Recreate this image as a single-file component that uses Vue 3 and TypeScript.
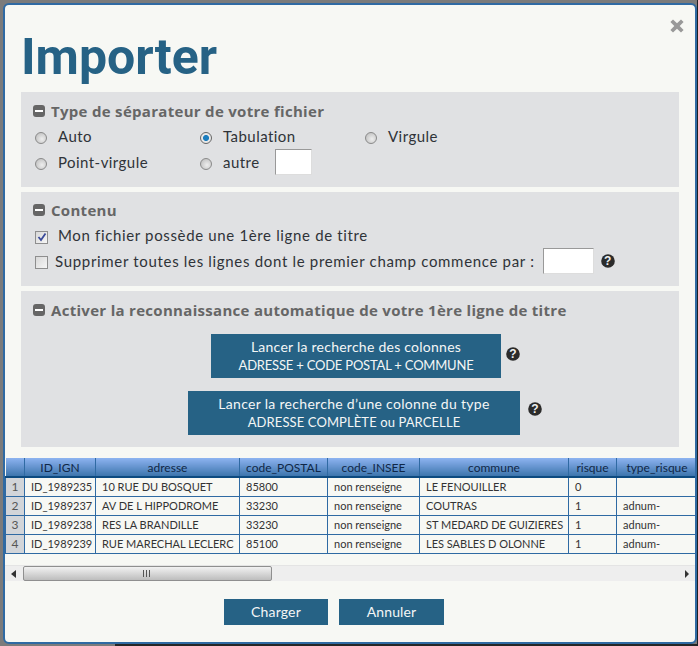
<script setup lang="ts">
const columns = [
  { key: 'id', label: 'ID_IGN', width: 71 },
  { key: 'adresse', label: 'adresse', width: 144 },
  { key: 'postal', label: 'code_POSTAL', width: 88 },
  { key: 'insee', label: 'code_INSEE', width: 92 },
  { key: 'commune', label: 'commune', width: 149 },
  { key: 'risque', label: 'risque', width: 48 },
  { key: 'type', label: 'type_risque', width: 81 },
]
const rows = [
  ['ID_1989235', '10 RUE DU BOSQUET', '85800', 'non renseigne', 'LE FENOUILLER', '0', ''],
  ['ID_1989237', 'AV DE L HIPPODROME', '33230', 'non renseigne', 'COUTRAS', '1', 'adnum-'],
  ['ID_1989238', 'RES LA BRANDILLE', '33230', 'non renseigne', 'ST MEDARD DE GUIZIERES', '1', 'adnum-'],
  ['ID_1989239', 'RUE MARECHAL LECLERC', '85100', 'non renseigne', 'LES SABLES D OLONNE', '1', 'adnum-'],
]
</script>

<template>
  <div class="page">
    <div class="dialog">
      <svg class="close" viewBox="0 0 14 14" width="14" height="14">
        <path d="M3 0.5 L7 4.3 L11 0.5 L13.6 3 L9.7 7 L13.6 11 L11 13.6 L7 9.7 L3 13.6 L0.4 11 L4.3 7 L0.4 3 Z" fill="#999" />
      </svg>
      <h1 class="title">Importer</h1>

      <section class="panel p1">
        <h2 class="heading"><span class="minus"></span>Type de séparateur de votre fichier</h2>
        <div class="grid">
          <label class="opt"><span class="radio"></span>Auto</label>
          <label class="opt"><span class="radio on"></span>Tabulation</label>
          <label class="opt"><span class="radio"></span>Virgule</label>
          <label class="opt"><span class="radio"></span>Point-virgule</label>
          <label class="opt"><span class="radio"></span>autre<span class="field small"></span></label>
        </div>
      </section>

      <section class="panel p2">
        <h2 class="heading"><span class="minus"></span>Contenu</h2>
        <label class="opt check-a"><span class="check on">
          <svg viewBox="0 0 10 10" width="10" height="10"><path d="M1.5 5 L4 8 L8.5 1.5" fill="none" stroke="#3a4a9a" stroke-width="1.8" /></svg>
        </span>Mon fichier possède une 1ère ligne de titre</label>
        <label class="opt check-b"><span class="check"></span>Supprimer toutes les lignes dont le premier champ commence par :<span class="field wide"></span>
          <svg class="help" viewBox="0 0 14 14" width="14" height="14"><circle cx="7" cy="7" r="6.8" fill="#2b2b2b" /><text x="7" y="11.2" text-anchor="middle" class="q">?</text></svg>
        </label>
      </section>

      <section class="panel p3">
        <h2 class="heading"><span class="minus"></span>Activer la reconnaissance automatique de votre 1ère ligne de titre</h2>
        <div class="action a1">
          <button class="btn big b1">Lancer la recherche des colonnes<span class="caps c1">ADRESSE + CODE POSTAL + COMMUNE</span></button>
          <svg class="help" viewBox="0 0 14 14" width="14" height="14"><circle cx="7" cy="7" r="6.8" fill="#2b2b2b" /><text x="7" y="11.2" text-anchor="middle" class="q">?</text></svg>
        </div>
        <div class="action a2">
          <button class="btn big b2">Lancer la recherche d’une colonne du type<span class="caps c2">ADRESSE COMPLÈTE ou PARCELLE</span></button>
          <svg class="help" viewBox="0 0 14 14" width="14" height="14"><circle cx="7" cy="7" r="6.8" fill="#2b2b2b" /><text x="7" y="11.2" text-anchor="middle" class="q">?</text></svg>
        </div>
      </section>

      <div class="table-wrap">
        <table>
          <colgroup>
            <col style="width: 19px" />
            <col v-for="c in columns" :key="c.key" :style="{ width: c.width + 'px' }" />
          </colgroup>
          <thead>
            <tr>
              <th></th>
              <th v-for="c in columns" :key="c.key">{{ c.label }}</th>
            </tr>
          </thead>
          <tbody>
            <tr v-for="(r, i) in rows" :key="i">
              <td class="num">{{ i + 1 }}</td>
              <td v-for="(v, j) in r" :key="j">{{ v }}</td>
            </tr>
          </tbody>
        </table>
      </div>

      <div class="scrollbar">
        <span class="arrow left"></span>
        <div class="track">
          <div class="thumb"><span class="grip"></span></div>
        </div>
        <span class="arrow right"></span>
      </div>

      <div class="footer">
        <button class="btn foot">Charger</button>
        <button class="btn foot last">Annuler</button>
      </div>
    </div>
  </div>
</template>

<style>
html, body { margin: 0; padding: 0; }
</style>

<style scoped>
.page {
  width: 698px;
  height: 646px;
  box-sizing: border-box;
  padding: 3px 1px 2px 3px;
  background:
    linear-gradient(#1c2026, #1c2026) 100% 100% / 1px 100% no-repeat,
    linear-gradient(#262626, #262626) 100% 100% / 583px 2px no-repeat,
    #7b7b7b;
  overflow: hidden;
  font-family: "Lato", "Liberation Sans", sans-serif;
  color: #333;
}
.dialog {
  position: relative;
  box-sizing: border-box;
  width: 694px;
  height: 641px;
  background: #f7f8f4;
  border: 2px solid #2f6aa3;
  border-radius: 6px;
  padding: 0 16px;
  overflow: hidden;
}
.close { position: absolute; top: 14px; right: 11px; }
.title {
  margin: 0;
  height: 87px;
  box-sizing: border-box;
  padding: 23px 0 0;
  font: 700 50px/58px "Roboto", "Liberation Sans", sans-serif;
  color: #266285;
}
.panel {
  background: #e0e1e3;
  margin-bottom: 5px;
  box-sizing: border-box;
  padding: 10px 12px 0;
}
.p1 { height: 95px; }
.p2 { height: 94px; padding-top: 9px; }
.p3 { height: 156px; }
.heading {
  margin: 0;
  display: flex;
  align-items: center;
  gap: 6px;
  font: 700 15px/18px "Open Sans", "Liberation Sans", sans-serif;
  letter-spacing: 0.3px;
  color: #666;
}
.minus {
  position: relative;
  width: 12px;
  height: 12px;
  border-radius: 3px;
  background: #666;
  flex: none;
}
.minus::after {
  content: "";
  position: absolute;
  left: 2px;
  right: 2px;
  top: 5px;
  height: 2px;
  background: #fff;
}
.grid {
  display: grid;
  grid-template-columns: 165px 165px 1fr;
  grid-auto-rows: 26px;
  margin-top: 3px;
}
.opt {
  display: flex;
  align-items: center;
  font-size: 15px;
  letter-spacing: 0.45px;
  color: #2f3338;
  white-space: nowrap;
}
.radio {
  width: 12px;
  height: 12px;
  box-sizing: border-box;
  margin: 4px 11px 0 2px;
  border-radius: 50%;
  border: 1px solid #8a8a8a;
  background: radial-gradient(circle at 60% 60%, #eee, #b8b8b8);
  flex: none;
}
.radio.on {
  background: radial-gradient(circle, #1b7dbe 0 2.6px, #e8e8e8 3.4px);
  border-color: #666;
}
.field {
  display: block;
  background: #fff;
  box-sizing: border-box;
  border: 1px solid #ddd;
  border-top-color: #999;
  border-left-color: #999;
  height: 26px;
}
.field.small { width: 37px; margin-left: 15px; }
.field.wide { width: 51px; margin-left: 8px; }
.check {
  display: flex;
  align-items: center;
  justify-content: center;
  width: 13px;
  height: 13px;
  box-sizing: border-box;
  border: 1px solid #8e8e8e;
  background: linear-gradient(135deg, #d8d8d8, #f6f6f6);
  margin: 4px 10px 0 2px;
  flex: none;
}
.check-a { height: 26px; margin-top: 3px; letter-spacing: 0.65px; }
.check-b { height: 26px; letter-spacing: 0.68px; }
.check-b .check { margin-right: 7px; margin-top: 3px; }
.help { flex: none; margin-left: 8px; }
.check-b .help { margin-left: 7px; }
.q { font: 700 12px "Liberation Sans", sans-serif; fill: #f0f0f0; }
.btn {
  display: block;
  border: 0;
  padding: 0;
  background: #266285;
  color: #f4f6f6;
  font-family: "Lato", "Liberation Sans", sans-serif;
  font-size: 14px;
  letter-spacing: 0.25px;
  line-height: 19px;
  text-align: center;
}
.caps { display: block; font-size: 13px; line-height: 18px; }
.c1 { letter-spacing: -0.2px; }
.c2 { letter-spacing: 0.1px; }
.action { display: flex; height: 44px; }
.a1 { margin: 15px 0 0 178px; }
.a2 { margin: 13px 0 0 155px; }
.big { height: 44px; padding-bottom: 2px; }
.b1 { width: 290px; }
.b2 { width: 332px; letter-spacing: 0.3px; }
.a1 .help { margin: 13px 0 0 5px; }
.a2 .help { margin: 11px 0 0 8px; }
.table-wrap {
  margin: 11px -16px 0;
  overflow: hidden;
  height: 96px;
}
table {
  width: 692px;
  table-layout: fixed;
  border-collapse: collapse;
  font-size: 11px;
  color: #333;
}
th {
  height: 18px;
  padding: 0;
  font-size: 12px;
  font-weight: 400;
  color: #0f2747;
  background: linear-gradient(180deg, #8db3f0, #3d75ad);
  border-right: 1px solid #2f6aa3;
  border-bottom: 2px solid #0c4a80;
  text-align: center;
}
td {
  height: 17px;
  padding: 0 0 1px 6px;
  border: 1px solid #2f6aa3;
  border-top: 0;
  white-space: nowrap;
  overflow: hidden;
}
td.num {
  padding: 0 0 1px;
  text-align: center;
  font-size: 12px;
  color: #555;
  background: #d2d5d9;
}
.scrollbar {
  display: flex;
  align-items: center;
  margin: 11px -16px 0;
  height: 16px;
  box-sizing: border-box;
  background: #eeeeee;
  border-top: 1px solid #e4e4e4;
}
.track { flex: 1; height: 15px; }
.thumb {
  position: relative;
  width: 249px;
  height: 15px;
  box-sizing: border-box;
  border: 1px solid #8f8f8f;
  border-radius: 2px;
  background: linear-gradient(180deg, #f2f2f2, #bdbdbd);
}
.grip {
  position: absolute;
  left: 119px;
  top: 3px;
  width: 8px;
  height: 7px;
  background: repeating-linear-gradient(90deg, #555 0 1px, transparent 1px 3px);
}
.arrow { width: 0; height: 0; border: 4px solid transparent; flex: none; }
.arrow.left { border-right: 5px solid #333; border-left: 0; margin: 0 7px 0 6px; }
.arrow.right { border-left: 4px solid #333; border-right: 0; margin: 0 6px; }
.footer {
  display: flex;
  gap: 11px;
  margin: 18px 0 0 203px;
}
.foot { width: 104px; height: 26px; padding-bottom: 2px; font-size: 14px; letter-spacing: 0.15px; }
.foot.last { width: 105px; }
</style>
